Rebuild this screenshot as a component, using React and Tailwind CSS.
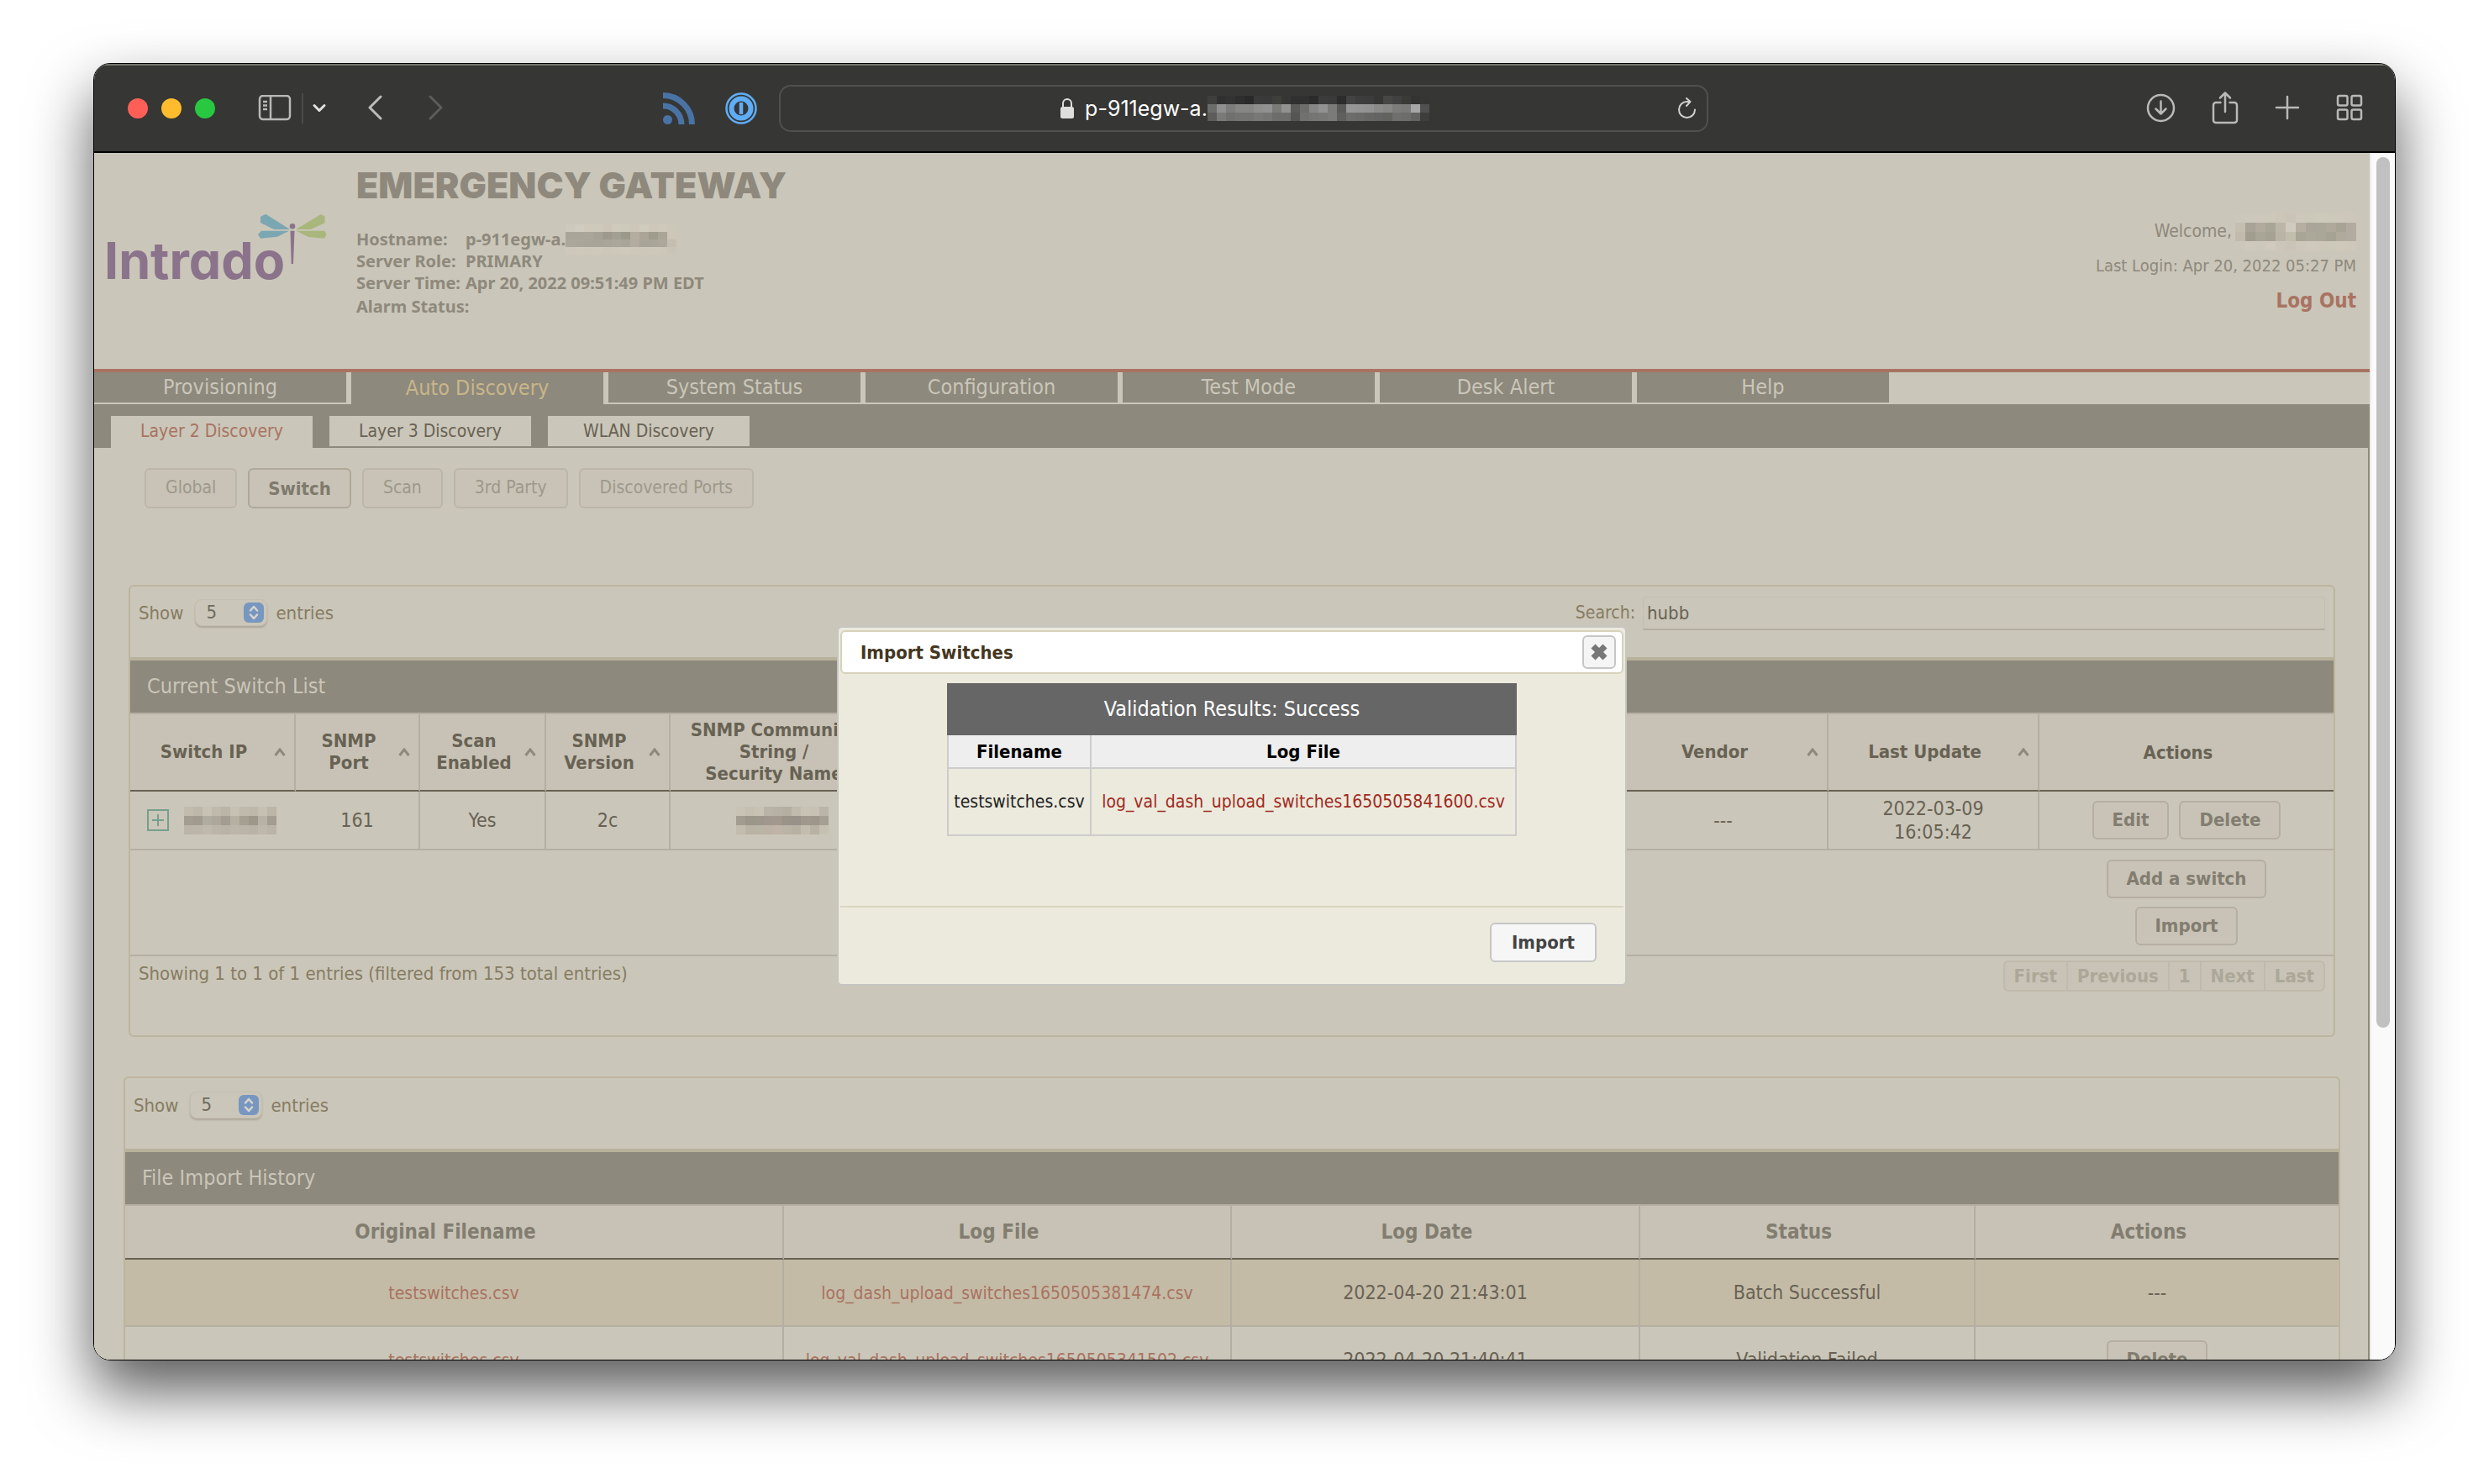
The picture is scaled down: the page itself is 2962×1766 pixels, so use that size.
import { X } from "lucide-react";

const UI = "font-['DejaVu_Sans_Condensed','Noto_Sans',sans-serif]";

function Mosaic({ rows, label, cell = "w-[11px] h-[11px]" }) {
  return (
    <span role="img" aria-label={label} className="inline-flex shrink-0 flex-col">
      {rows.map((row, i) => (
        <span key={i} className="flex">
          {row.split(" ").map((c, j) => (
            <span key={j} className={cell} style={{ backgroundColor: `#${c}` }} />
          ))}
        </span>
      ))}
    </span>
  );
}

const URL_MOSAIC = [
  "3f3f3e 303030 323231 2e2e2e 292929 3a3a3a 393939 3e3e3d 363635 303030 303030 2b2b2b 3c3c3c 3a3a3a 2c2c2c 434343 3d3d3d 3c3c3b 363635 464645 404040 3a3a39 333333 353534",
  "6c6c6b 8f8f8f 7c7c7b 868685 868685 8e8e8d 919191 7a7a79 929292 5a5a59 6d6d6c 868686 929292 7b7b7a 5a5a59 969696 949494 929292 8a8a89 868685 7c7c7b 7a7a79 a6a6a6 505050",
  "5c5c5b 7a7a79 70706f 737372 737372 787877 757574 6d6d6c 6d6d6c 555554 71716f 757574 777776 7b7b7a 5f5f5e 6d6d6c 6a6a69 666665 646463 62625f 6f6f6e 6d6d6c 646463 3e3e3d",
];
const HOST_MOSAIC = [
  "cdc9bb d0ccbf cec9bb cdc9bb cbc6b8 cfcabc cdc9bb ccc7b9 cfcbbd cdc8ba cec9bb ccc7b9",
  "a9a699 a9a699 aaa79a a6a396 9d998c a2a091 9b998a b3aea0 aba598 9f9b8d a9a597 ccc7b9",
  "aba89b aaa79a a9a699 a8a598 a9a699 aba89b a9a699 b1ac9f a8a598 a9a699 aba89b c3beb0",
  "cdc8bb cec9bb cdc8ba cec9bb ccc7b9 cdc8ba cec9bb cdc8ba ccc7b9 cdc8ba ccc7b9 c9c4b6",
];
const USER_MOSAIC = [
  "cbc7ba ccc8bb cdc8bb ccc8ba cbc6b8 c9c4b7 cdc8bb ccc8ba cdc9bb ccc8ba cdc8bb ccc7ba",
  "c4bfb1 a7a396 b0ab9d a9a597 bbb6a8 d0cbbe b6afa1 a9a598 aaa698 aea99b a7a395 b1ac9f",
  "c0bbad a19d8f a9a597 a5a193 b9b4a6 c2beae a9a597 aca89a aaa698 a6a294 afaa9c b1ac9f",
  "cbc7ba cec9bc ccc8bb cfcabd cbc6b8 c9c4b7 cdc8bb cec9bc cdc8ba ccc8ba cec9bb cdc8ba",
];
const IP_MOSAIC = [
  "c1bcae bcb7a9 c7c2b4 bfbaac bab5a7 c6c1b3 bfbaac bdb8aa c5c0b2 bbb6a8",
  "a39d91 a19b8f b1aca0 aca79a a29d90 b5b0a2 a59f92 9d978a b7b2a5 a39d91",
  "bab5a8 bbb6a9 beb9ac bab5a8 b8b3a6 bbb6a9 bab5a8 b8b3a6 bdb8ab b9b4a7",
];
const COMMUNITY_MOSAIC = [
  "c8c3b5 c4bfb1 c7c2b4 b8b3a6 b6b1a4 b4afa1 bfbaac c7c2b4 c6c1b3 bab5a8",
  "a29b8f 9b958a 9d978b a0988e a3988e 9a9387 97918a a0988d 9d968a a59f92",
  "c1bcae b8b3a5 b9b4a6 bcb3a6 c0b3a8 b9b4a6 b6b1a3 c2bdaf b7b2a4 c5c0b2",
];

function Toolbar() {
  return (
    <header className="flex h-[106px] shrink-0 items-center border-t-2 border-b-2 border-t-[#74746e] border-b-black bg-[#363634] pr-[38px] pl-10">
      <div className="flex w-[656px] shrink-0 items-center">
        <div className="flex gap-4">
          <button aria-label="Close window" className="size-6 rounded-full bg-[#ff5f57]" />
          <button aria-label="Minimize window" className="size-6 rounded-full bg-[#febb2e]" />
          <button aria-label="Zoom window" className="size-6 rounded-full bg-[#28c840]" />
        </div>
        <button aria-label="Sidebar" className="ml-[51px]">
          <svg width="40" height="32" viewBox="0 0 40 32" fill="none" stroke="#b9b9b8" strokeWidth="2.5">
            <rect x="2" y="1" width="36" height="28" rx="4" />
            <path d="M15 1v28M6 8h5M6 12.5h5M6 17h5" />
          </svg>
        </button>
        <span className="ml-3 h-9 w-0.5 bg-[#4a4a48]" />
        <button aria-label="Sidebar options" className="ml-2.5">
          <svg width="18" height="12" viewBox="0 0 18 12" fill="none" stroke="#e2e2e1" strokeWidth="3" strokeLinecap="round" strokeLinejoin="round">
            <path d="M3 2.5l6 6 6-6" />
          </svg>
        </button>
        <button aria-label="Back" className="ml-[48px]">
          <svg width="20" height="32" viewBox="0 0 20 32" fill="none" stroke="#bcbcbb" strokeWidth="3" strokeLinecap="round" strokeLinejoin="round">
            <path d="M16 2L3 15l13 13" />
          </svg>
        </button>
        <button aria-label="Forward" className="ml-[51px]">
          <svg width="20" height="32" viewBox="0 0 20 32" fill="none" stroke="#5c5c5b" strokeWidth="3" strokeLinecap="round" strokeLinejoin="round">
            <path d="M4 2l13 13L4 28" />
          </svg>
        </button>
      </div>
      <div className="flex flex-1 items-center">
        <button aria-label="Feeds" className="-ml-[19px]">
          <svg width="39" height="38" viewBox="0 0 39 38" fill="none" stroke="#4a73a5" strokeWidth="7">
            <circle cx="5.5" cy="32.5" r="5.5" fill="#4a73a5" stroke="none" />
            <path d="M0 16a22 22 0 0 1 22 22M0 3.5a34.5 34.5 0 0 1 34.5 34.5" />
          </svg>
        </button>
        <button aria-label="Passwords" className="ml-[35px]">
          <svg width="38" height="38" viewBox="0 0 38 38" fill="none" stroke="#5fadf7">
            <circle cx="19" cy="19" r="17.5" strokeWidth="2.5" />
            <circle cx="19" cy="19" r="11.5" strokeWidth="6" />
            <path d="M19 12v14" strokeWidth="4.5" />
          </svg>
        </button>
        <div className="ml-[26px] flex h-14 min-w-0 flex-1 items-center rounded-[14px] border-2 border-[#50504f] pr-3 pl-9">
          <div className="flex flex-1 items-center justify-center">
            <svg width="18" height="26" viewBox="0 0 18 26" className="mr-3">
              <rect x="1" y="11" width="16" height="14" rx="2.5" fill="#dededd" />
              <path d="M4 12V7a5 5 0 0 1 10 0v5" fill="none" stroke="#dededd" strokeWidth="2" />
            </svg>
            <span className="font-['Inter',sans-serif] text-[25px] leading-8 text-white">p-911egw-a.</span>
            <Mosaic rows={URL_MOSAIC} label="Hidden address" cell="w-[11px] h-2.5" />
          </div>
          <button aria-label="Reload">
            <svg width="22" height="27" viewBox="0 0 22 27" fill="none" stroke="#d0d0cf" strokeWidth="2" strokeLinecap="round" strokeLinejoin="round">
              <path d="M20 14.5a9.5 9.500 0 1 1-9.5-9.5h3.5M10 1l4.5 4-4.5 5" />
            </svg>
          </button>
        </div>
      </div>
      <div className="ml-[521px] flex shrink-0 items-center gap-[43px] pb-0.5">
        <button aria-label="Downloads">
          <svg width="35" height="35" viewBox="0 0 35 35" fill="none" stroke="#b9b9b8" strokeWidth="2.5" strokeLinecap="round" strokeLinejoin="round">
            <circle cx="17.5" cy="17.5" r="15.5" />
            <path d="M17.5 9.5v15M11.5 18.5l6 6 6-6" />
          </svg>
        </button>
        <button aria-label="Share">
          <svg width="32" height="40" viewBox="0 0 32 40" fill="none" stroke="#b9b9b8" strokeWidth="2.5" strokeLinecap="round" strokeLinejoin="round">
            <path d="M10.5 14H5a3 3 0 0 0-3 3v18a3 3 0 0 0 3 3h22a3 3 0 0 0 3-3V17a3 3 0 0 0-3-3h-5.5M16 25V2.5M10 8.5l6-6 6 6" />
          </svg>
        </button>
        <button aria-label="New tab">
          <svg width="30" height="30" viewBox="0 0 30 30" fill="none" stroke="#b9b9b8" strokeWidth="2.5" strokeLinecap="round">
            <path d="M15 2v26M2 15h26" />
          </svg>
        </button>
        <button aria-label="Tab overview">
          <svg width="32" height="32" viewBox="0 0 32 32" fill="none" stroke="#b9b9b8" strokeWidth="2.5">
            <rect x="2" y="2" width="11.5" height="11.5" rx="2" />
            <rect x="18.5" y="2" width="11.5" height="11.5" rx="2" />
            <rect x="2" y="18.5" width="11.5" height="11.5" rx="2" />
            <rect x="18.5" y="18.5" width="11.5" height="11.5" rx="2" />
          </svg>
        </button>
      </div>
    </header>
  );
}

function Logo() {
  return (
    <svg width="300" height="110" viewBox="2 0 300 110" className="mt-[59px] shrink-0">
      <text x="14" y="91" fill="#8b738b" className="font-['Inter',sans-serif] text-[61px] font-bold [font-feature-settings:'cv11']">
        Intrado
      </text>
      <g fill="#7ba7b2">
        <path d="M200 17l5-2.7h2l28 17.7h-19l-16-8z" />
        <path d="M201 33.7h33l-14 7-20 2-3-4.7z" />
      </g>
      <g fill="#a9b67c">
        <path d="M242 32l29.5-17.7 5 2v8l-17 7.7z" />
        <path d="M242.5 33.7H276l2.5 4.3-2.7 4.7-18.5-1.7z" />
      </g>
      <g fill="#8b738b">
        <circle cx="238" cy="28.3" r="3.3" />
        <path d="M235.5 33.7h5L239 73h-2.3z" />
      </g>
    </svg>
  );
}

function SiteHeader() {
  return (
    <div className="flex h-[261px] border-b-4 border-[#a97361] text-[#8e897c]">
      <Logo />
      <div className="ml-3 flex flex-1 flex-col pt-[18px]">
        <h1 className="font-['Inter',sans-serif] text-[43px] leading-10 font-black">EMERGENCY GATEWAY</h1>
        <dl className="mt-8 grid auto-rows-[26px] grid-cols-[130px_1fr] font-['Noto_Sans',sans-serif] text-xl leading-[26px] font-bold whitespace-nowrap">
          <dt>Hostname:</dt>
          <dd className="flex items-center">
            p-911egw-a.
            <Mosaic rows={HOST_MOSAIC} label="Hidden host" cell="w-[11px] h-[9px]" />
          </dd>
          <dt>Server Role:</dt>
          <dd>PRIMARY</dd>
          <dt>Server Time:</dt>
          <dd>Apr 20, 2022 09:51:49 PM EDT</dd>
          <dt className="pt-0.5">Alarm Status:</dt>
          <dd />
        </dl>
      </div>
      <div className="flex flex-col items-end pt-[76px] pr-4">
        <div className="flex h-9 items-center text-[21px]">
          Welcome,
          <span className="ml-1 flex">
            <Mosaic rows={USER_MOSAIC} label="Hidden user" cell="w-3 h-[11px]" />
          </span>
        </div>
        <div className="mt-1 text-xl leading-9">Last Login: Apr 20, 2022 05:27 PM</div>
        <a href="#logout" className="mt-1.5 text-[24px] leading-9 font-bold text-[#a97361]">Log Out</a>
      </div>
    </div>
  );
}

const TABS = ["Provisioning", "Auto Discovery", "System Status", "Configuration", "Test Mode", "Desk Alert", "Help"];

function Nav() {
  return (
    <nav>
      <div className="flex text-[25px] leading-9">
        {TABS.map((t) => (
          <a
            key={t}
            href="#tab"
            className={
              t === "Auto Discovery"
                ? "h-[38px] w-[306px] border-r-[6px] border-[#cac6b9] bg-[#8d897c] pt-px text-center text-[#c9b68a]"
                : "h-9 w-[306px] border-r-[6px] border-[#cac6b9] bg-[#8d897c] text-center text-[#cac6b9]"
            }
          >
            {t}
          </a>
        ))}
      </div>
      <div className="flex h-[52px] gap-5 bg-[#8d897c] pt-3.5 pl-5 text-[21px] leading-[37px] text-[#686254]">
        <a href="#l2" className="h-[38px] w-60 bg-[#cac6b9] text-center text-[#a97361]">Layer 2 Discovery</a>
        <a href="#l3" className="h-9 w-60 bg-[#cac6b9] text-center">Layer 3 Discovery</a>
        <a href="#wlan" className="h-9 w-60 bg-[#cac6b9] text-center">WLAN Discovery</a>
      </div>
    </nav>
  );
}

function FilterButtons() {
  return (
    <div className="flex gap-[13px] pt-6 pl-[60px] text-[21px]">
      {["Global", "Switch", "Scan", "3rd Party", "Discovered Ports"].map((b) => (
        <button
          key={b}
          className={
            b === "Switch"
              ? "h-12 rounded-md border-2 border-[#aea897] bg-[#c8c3b6] px-[22px] text-[22px] font-bold text-[#7f7a6d]"
              : "h-12 rounded-md border-2 border-[#bbb6a8] bg-[#c8c3b6] px-[23px] text-[#9d988a]"
          }
        >
          {b}
        </button>
      ))}
    </div>
  );
}

function ShowEntries() {
  return (
    <label className="mt-[15px] flex h-8 items-center text-[22px] text-[#867c62]">
      Show
      <span className="relative mr-2.5 ml-3.5 flex">
        <select
          defaultValue="5"
          className="h-8 w-[86px] appearance-none rounded-lg border border-[#c3beb0] bg-[#cac6b9] pl-3 text-[22px] leading-7 text-[#6f6a5c] shadow-[0_2px_2px_rgba(90,80,60,0.25)]"
        >
          <option>5</option>
        </select>
        <svg width="24" height="24" viewBox="0 0 24 24" className="pointer-events-none absolute top-1 right-1" fill="none" stroke="#d8d5cc" strokeWidth="2.5" strokeLinecap="round" strokeLinejoin="round">
          <rect width="24" height="24" rx="6" fill="#7897c0" stroke="none" />
          <path d="M8 9.5l4-4.5 4 4.5M8 14.5l4 4.5 4-4.5" />
        </svg>
      </span>
      entries
    </label>
  );
}

function PanelTitle({ children }) {
  return (
    <h2 className="h-[68px] border-t-4 border-b-2 border-t-[#b8b29c] border-b-[#b4afa2] bg-[#8d897c] pl-5 text-[25px] leading-[62px] text-[#cac6b9]">
      {children}
    </h2>
  );
}

const LINE = "border-r-2 border-r-[#b4afa2]";

function SortTh({ children }) {
  return (
    <th className="relative border-r-2 border-b-2 border-r-[#b4afa2] border-b-[#686254] pr-5 text-center leading-[26px] font-bold">
      {children}
      <svg width="14" height="10" viewBox="0 0 14 10" className="absolute top-10 right-2.5" fill="none" stroke="#8d897c" strokeWidth="3">
        <path d="M1.5 9L7 2l5.5 7" />
      </svg>
    </th>
  );
}

const ACTION =
  "h-[46px] rounded-md border-2 border-[#b4afa2] bg-[#c8c3b6] px-[22px] text-[22px] leading-10 font-bold text-[#827d70]";

function SwitchPanel() {
  return (
    <section className="mt-[91px] mr-[39px] ml-[41px] rounded-md border-2 border-[#bcb59e] pb-[52px]">
      <div className="flex h-[84px] items-start justify-between px-2.5">
        <ShowEntries />
        <label className="mt-3 flex items-center gap-[9px] text-[21px] text-[#867c62]">
          Search:
          <input
            defaultValue="hubb"
            className="h-10 w-[812px] border border-b-2 border-[#c4bfb1] border-b-[#b4afa2] bg-[#cac6b9] px-1 text-[22px] text-[#686254]"
          />
        </label>
      </div>
      <PanelTitle>Current Switch List</PanelTitle>
      <table className="w-full table-fixed border-separate border-spacing-0 text-center text-[#686254]">
        <colgroup>
          <col className="w-[197px]" />
          <col className="w-[148px]" />
          <col className="w-[150px]" />
          <col className="w-[148px]" />
          <col className="w-[268px]" />
          <col />
          <col className="w-[249px]" />
          <col className="w-[251px]" />
          <col className="w-[350px]" />
        </colgroup>
        <thead className="bg-[#c7c2b5] text-[22px]">
          <tr className="h-[92px]">
            <SortTh>Switch IP</SortTh>
            <SortTh>SNMP<br />Port</SortTh>
            <SortTh>Scan<br />Enabled</SortTh>
            <SortTh>SNMP<br />Version</SortTh>
            <SortTh>SNMP Community<br />String /<br />Security Name</SortTh>
            <th className="border-r-2 border-b-2 border-r-[#b4afa2] border-b-[#686254]" />
            <SortTh>Vendor</SortTh>
            <SortTh>Last Update</SortTh>
            <th className="border-b-2 border-b-[#686254] pr-5 font-bold">Actions</th>
          </tr>
        </thead>
        <tbody className="text-[23px] leading-7 [&_td]:border-b-2 [&_td]:border-b-[#b4afa2]">
          <tr className="h-[70px]">
            <td>
              <div className="flex items-center gap-[18px] pl-5">
                <button aria-label="Expand row">
                  <svg width="26" height="26" viewBox="0 0 26 26" fill="none" stroke="#75a08e" strokeWidth="2">
                    <rect x="1" y="1" width="24" height="24" />
                    <path d="M13 6v14M6 13h14" />
                  </svg>
                </button>
                <Mosaic rows={IP_MOSAIC} label="Hidden IP" />
              </div>
            </td>
            <td className={LINE}>161</td>
            <td className={LINE}>Yes</td>
            <td className={LINE}>2c</td>
            <td className={LINE}>
              <div className="flex justify-center">
                <Mosaic rows={COMMUNITY_MOSAIC} label="Hidden community string" />
              </div>
            </td>
            <td className={LINE} />
            <td className={LINE}>---</td>
            <td className={LINE}>2022-03-09<br />16:05:42</td>
            <td>
              <div className="flex justify-center gap-3">
                <button className={ACTION}>Edit</button>
                <button className={ACTION}>Delete</button>
              </div>
            </td>
          </tr>
          <tr className="h-[126px]">
            <td colSpan={8} />
            <td>
              <div className="flex flex-col items-center gap-2.5">
                <button className={ACTION}>Add a switch</button>
                <button className={ACTION}>Import</button>
              </div>
            </td>
          </tr>
        </tbody>
      </table>
      <div className="flex items-start justify-between px-2.5 pt-[5px]">
        <p className="text-[22px] leading-8 text-[#867c62]">Showing 1 to 1 of 1 entries (filtered from 153 total entries)</p>
        <div className="flex divide-x-2 divide-[#bfbaac] rounded-md border-2 border-[#bfbaac] bg-[#c8c3b6] text-[22px] leading-[33px] font-bold text-[#aca798]">
          {["First", "Previous", "1", "Next", "Last"].map((p) => (
            <button key={p} className="px-[11px]">{p}</button>
          ))}
        </div>
      </div>
    </section>
  );
}

const HISTORY = [
  ["testswitches.csv", "log_dash_upload_switches1650505381474.csv", "2022-04-20 21:43:01", "Batch Successful", null],
  ["testswitches.csv", "log_val_dash_upload_switches1650505341502.csv", "2022-04-20 21:40:41", "Validation Failed", "Delete"],
];

function HistoryPanel() {
  return (
    <section className="mt-[47px] mr-[33px] ml-[35px] rounded-t-md border-2 border-[#bcb59e]">
      <div className="h-[84px] px-2.5 pt-px">
        <ShowEntries />
      </div>
      <PanelTitle>File Import History</PanelTitle>
      <table className="w-full table-fixed border-separate border-spacing-0 text-center text-[#686254]">
        <colgroup>
          <col />
          <col className="w-[533px]" />
          <col className="w-[486px]" />
          <col className="w-[399px]" />
          <col className="w-[432px]" />
        </colgroup>
        <thead className="bg-[#c7c2b5] text-[24px] text-[#827d70]">
          <tr className="h-16 [&>th]:border-r-2 [&>th]:border-b-2 [&>th]:border-r-[#b4afa2] [&>th]:border-b-[#686254] [&>th]:pr-5 [&>th:last-child]:border-r-0">
            <th>Original Filename</th>
            <th>Log File</th>
            <th>Log Date</th>
            <th>Status</th>
            <th>Actions</th>
          </tr>
        </thead>
        <tbody className="text-[23px]">
          {HISTORY.map(([file, log, date, status, action], i) => (
            <tr
              key={log}
              className={`h-20 [&>td]:border-r-2 [&>td]:border-b-2 [&>td]:border-[#b4afa2] [&>td:last-child]:border-r-0 ${i === 0 ? "bg-[#c4bba6]" : "bg-[#cac6b9]"}`}
            >
              <td><a href="#file" className="text-[21px] text-[#a97361]">{file}</a></td>
              <td><a href="#log" className="text-[21px] text-[#a97361]">{log}</a></td>
              <td>{date}</td>
              <td>{status}</td>
              <td>{action ? <button className={ACTION}>{action}</button> : "---"}</td>
            </tr>
          ))}
        </tbody>
      </table>
    </section>
  );
}

function ImportDialog() {
  return (
    <div role="dialog" aria-labelledby="import-title" className="w-[940px] rounded-md border-2 border-[#c6c5c2] bg-[#eceadd] px-0.5 pt-[3px]">
      <div className="flex h-[52px] items-center justify-between rounded-md border-2 border-[#d6d2bb] bg-white pr-[7px] pl-[22px]">
        <h2 id="import-title" className="text-[22px] font-bold text-[#443620]">Import Switches</h2>
        <button aria-label="Close" className="flex size-10 items-center justify-center rounded-md border-2 border-[#c6c6c6] bg-[#f5f5f5] text-[#777]">
          <X size={28} strokeWidth={6} strokeLinecap="butt" />
        </button>
      </div>
      <div className="flex h-[276px] justify-center pt-[11px]">
        <table className="h-[182px] w-[678px] border-separate border-spacing-0 text-center">
          <thead>
            <tr className="h-[62px] bg-[#666]">
              <th colSpan={2} className="text-[25px] font-normal text-white">Validation Results: Success</th>
            </tr>
            <tr className="h-10 bg-[#eee] text-[22px] text-black">
              <th className="border-x-2 border-b-2 border-[#ccc]">Filename</th>
              <th className="border-r-2 border-b-2 border-[#ccc]">Log File</th>
            </tr>
          </thead>
          <tbody>
            <tr className="h-20 text-[21px]">
              <td className="w-[172px] border-x-2 border-b-2 border-[#ccc] pt-0.5 text-[#222]">testswitches.csv</td>
              <td className="border-r-2 border-b-2 border-[#ccc] pt-0.5">
                <a href="#log" className="text-[#a12b21]">log_val_dash_upload_switches1650505841600.csv</a>
              </td>
            </tr>
          </tbody>
        </table>
      </div>
      <div className="flex justify-end border-t-2 border-[#d9d5c2] pt-[18px] pr-8 pb-[26px]">
        <button className="h-[47px] rounded-md border-2 border-[#c6c6c6] bg-[#f6f6f6] px-6 text-[22px] font-bold text-[#444]">Import</button>
      </div>
    </div>
  );
}

export default function App() {
  return (
    <div className={`h-screen overflow-hidden bg-white px-[111px] pt-[75px] pb-[147px] ${UI}`}>
      <div className="flex h-full flex-col overflow-hidden rounded-[20px] border border-black shadow-[0_36px_72px_rgba(0,0,0,0.65)]">
        <Toolbar />
        <div className="flex min-h-0 flex-1">
          <main className="relative min-w-0 flex-1 overflow-hidden bg-[#cac6b9]">
            <SiteHeader />
            <Nav />
            <div className="border-r-2 border-[#8d897c]">
              <FilterButtons />
              <SwitchPanel />
              <HistoryPanel />
            </div>
            <div className="absolute inset-0 flex items-start justify-center pt-[563px]">
              <ImportDialog />
            </div>
          </main>
          <div className="w-[30px] shrink-0 border-l-2 border-[#ececec] bg-[#fafafa] pt-[5px] pl-1.5">
            <div className="h-[1036px] w-4 rounded-full bg-[#c1c1c1]" />
          </div>
        </div>
      </div>
    </div>
  );
}
